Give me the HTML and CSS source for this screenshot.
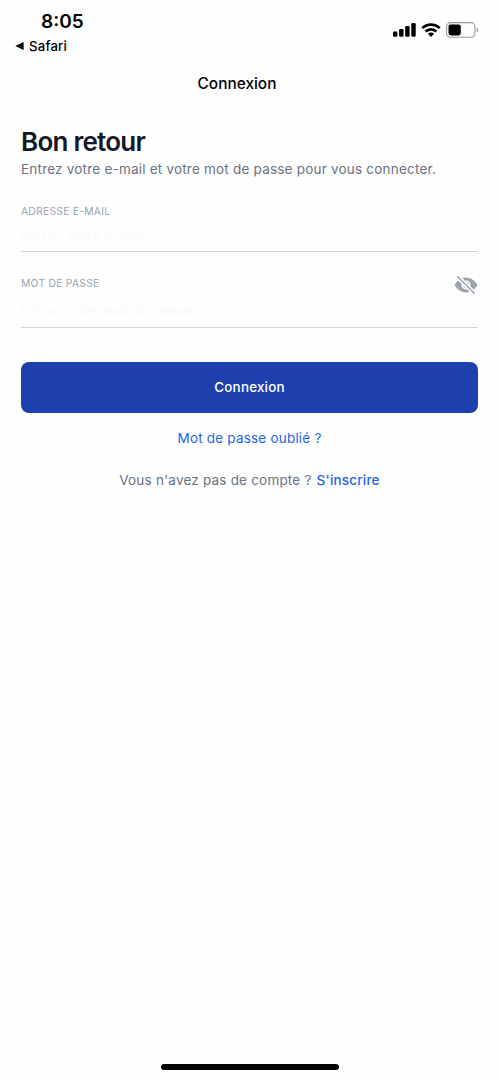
FILE: index.html
```html
<!DOCTYPE html>
<html lang="fr">
<head>
<meta charset="utf-8">
<title>Connexion</title>
<link rel="stylesheet" href="styles.css">
</head>
<body>
<div class="screen">
  <header class="status">
    <div class="status-left">
      <div class="clock">8:05</div>
      <div class="back"><svg width="9" height="8" viewBox="0 0 9 8"><path d="M.3 4 8.6 0v8z"/></svg><span>Safari</span></div>
    </div>
    <div class="indicators">
      <svg class="signal" width="23" height="14" viewBox="0 0 23 14"><rect x="0" y="8.6" width="4.4" height="5.2" rx="1.2"/><rect x="6.1" y="6" width="4.4" height="7.8" rx="1.2"/><rect x="12.2" y="3" width="4.4" height="10.8" rx="1.2"/><rect x="18.3" y="0" width="4.4" height="13.8" rx="1.2"/></svg>
      <svg class="wifi" width="20" height="14" viewBox="0 0 20 14"><path d="M1.3 5.1a12.4 12.4 0 0 1 17.4 0M4.6 8.5a7.7 7.7 0 0 1 10.8 0" fill="none" stroke="#000" stroke-width="2.7"/><path d="M6.9 10.8a4.4 4.4 0 0 1 6.2 0L10 13.9z"/></svg>
      <svg class="battery" width="33" height="16" viewBox="0 0 33 16"><rect x=".6" y=".6" width="28.3" height="14.6" rx="4" fill="none" stroke="#999" stroke-width="1.1"/><rect x="2.5" y="2.4" width="12.3" height="11" rx="2.3"/><path d="M30.7 5.4c2 .8 2 4.2 0 5z" fill="#999"/></svg>
    </div>
  </header>
  <div class="nav-title">Connexion</div>
  <main class="content">
    <h1 class="title">Bon retour</h1>
    <p class="subtitle">Entrez votre e-mail et votre mot de passe pour vous connecter.</p>
    <div class="field field-email">
      <div class="label">ADRESSE E-MAIL</div>
      <div class="placeholder">Entrez votre e-mail</div>
    </div>
    <div class="field field-password">
      <div class="field-text">
        <div class="label">MOT DE PASSE</div>
        <div class="placeholder">Entrez votre mot de passe</div>
      </div>
      <svg class="eye" width="24" height="24" viewBox="0 0 512 512"><path d="M432 448a15.92 15.92 0 01-11.31-4.69l-352-352a16 16 0 0122.62-22.62l352 352A16 16 0 01432 448zM248 315.85l-51.79-51.79a2 2 0 00-3.39 1.69 64.11 64.11 0 0053.49 53.49 2 2 0 001.69-3.39zM264 196.15L315.87 248a2 2 0 003.4-1.69 64.13 64.13 0 00-53.55-53.55 2 2 0 00-1.72 3.39z"/><path d="M491 273.36a32.2 32.2 0 00-.1-34.76c-26.46-40.92-60.79-75.68-99.27-100.53C349 110.55 302 96 255.68 96a226.54 226.54 0 00-71.82 11.79 4 4 0 00-1.56 6.63l47.24 47.24a4 4 0 003.82 1.05 96 96 0 01116 116 4 4 0 001.05 3.81l67.95 68a4 4 0 005.4.24 343.81 343.81 0 0067.24-77.4zM256 352a96 96 0 01-93.3-118.63 4 4 0 00-1.05-3.81l-66.84-66.87a4 4 0 00-5.41-.23c-24.39 20.81-47 46.13-67.67 75.72a31.92 31.92 0 00-.64 35.54c26.41 41.33 60.4 76.14 98.28 100.65C162 402 207.9 416 255.68 416a238.22 238.22 0 0072.64-11.55 4 4 0 001.61-6.64l-47.47-47.46a4 4 0 00-3.81-1.05A96 96 0 01256 352z"/></svg>
    </div>
    <button class="submit">Connexion</button>
    <a class="forgot">Mot de passe oublié ?</a>
    <p class="signup"><span class="question">Vous n'avez pas de compte ?</span><a class="signup-link">S'inscrire</a></p>
  </main>
  <div class="home-bar"></div>
</div>
</body>
</html>
```
FILE: styles.css
```css
* { box-sizing: border-box; margin: 0; padding: 0; }
body { background: #fefefe; font-family: Inter, "Liberation Sans", sans-serif; color: #000; }
.screen { width: 499px; height: 1080px; display: flex; flex-direction: column; white-space: nowrap; overflow: hidden; }
svg { display: block; flex: none; }
.status { height: 62px; display: flex; justify-content: space-between; padding: 10px 20px 0 15px; }
.clock { padding-left: 26px; font-size: 19px; line-height: 24px; font-weight: 600; }
.back { display: flex; align-items: center; gap: 5px; margin-top: 3px; font-size: 13.2px; line-height: 18px; font-weight: 500; letter-spacing: .2px; }
.indicators { display: flex; align-items: center; height: 16px; margin-top: 12px; }
.wifi { margin-left: 5px; }
.battery { margin-left: 5px; }
.nav-title { height: 42px; padding: 1px 25px 0 0; line-height: 42px; text-align: center; font-size: 15.4px; font-weight: 500; }
.content { flex: 1; padding: 22px 21px 0; display: flex; flex-direction: column; }
.title { font-size: 26px; line-height: 32px; font-weight: 600; letter-spacing: -.75px; color: #111827; }
.subtitle { margin-top: 1px; font-size: 13.5px; line-height: 20px; letter-spacing: .21px; color: #6b7280; }
.field { border-bottom: 1px solid #d1d5db; }
.field-email { margin-top: 24px; height: 49px; }
.field-password { margin-top: 21px; height: 55px; display: flex; justify-content: space-between; }
.label { padding-top: 1px; font-size: 10.3px; line-height: 14px; letter-spacing: .27px; color: #9ca3af; }
.placeholder { font-size: 13.5px; line-height: 20px; letter-spacing: .2px; margin-top: 6px; color: #f9f9fa; }
.field-password .label { padding-top: 3px; }
.field-password .placeholder { margin-top: 10px; }
.eye { fill: #9ca3af; }
.submit { margin-top: 34px; height: 51px; padding-bottom: 1px; border: 0; border-radius: 8px; background: #1e40af; color: #fff; font: 500 13.4px/20px Inter, sans-serif; letter-spacing: .2px; }
.forgot { margin-top: 15px; text-align: center; font-size: 13.5px; line-height: 20px; letter-spacing: .2px; color: #2563eb; }
.signup { margin-top: 22px; display: flex; justify-content: center; gap: 5px; font-size: 13.5px; line-height: 20px; letter-spacing: .2px; color: #6b7280; }
.signup-link { color: #2563eb; font-weight: 500; }
.home-bar { width: 178px; height: 6px; border-radius: 3px; background: #000; margin: 0 auto 10px; }
```
